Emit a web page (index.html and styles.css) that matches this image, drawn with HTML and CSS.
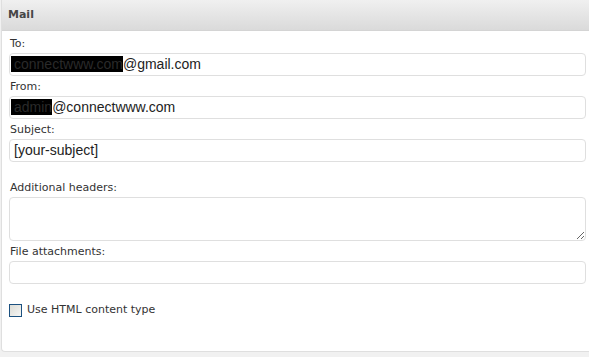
FILE: index.html
```html
<!DOCTYPE html>
<html lang="en">
<head>
    <meta charset="UTF-8">
    <title>Mail</title>
    <link rel="stylesheet" href="styles.css">
</head>
<body>
    <div class="panel">
        <div class="panel-head">Mail</div>
        <div class="panel-body">
            <div class="field">
                <div class="label">To:</div>
                <div class="text-box"><span class="redact">connectwww.com</span>@gmail.com</div>
            </div>
            <div class="field">
                <div class="label">From:</div>
                <div class="text-box"><span class="redact">admin</span>@connectwww.com</div>
            </div>
            <div class="field">
                <div class="label">Subject:</div>
                <div class="text-box">[your-subject]</div>
            </div>
            <div class="field spaced">
                <div class="label">Additional headers:</div>
                <textarea class="text-area"></textarea>
            </div>
            <div class="field">
                <div class="label">File attachments:</div>
                <div class="text-box"></div>
            </div>
            <div class="check-row">
                <span class="check"></span>
                <span class="check-label">Use HTML content type</span>
            </div>
        </div>
    </div>
</body>
</html>
```

FILE: styles.css
```css
html, body {
    margin: 0;
    padding: 0;
    overflow: hidden;
}
body {
    background-color: #f1f1f1;
    font-family: 'DejaVu Sans', Verdana, sans-serif;
    font-size: 11px;
    color: #333;
    height: 357px;
}
.panel {
    margin-left: 1px;
    width: 620px;
    height: 352px;
    box-sizing: border-box;
    background-color: #fff;
    border-left: 1px solid #dfdfdf;
    border-bottom: 1px solid #dfdfdf;
    border-bottom-left-radius: 4px;
}
.panel-head {
    height: 30px;
    line-height: 29px;
    padding-left: 6px;
    font-weight: bold;
    color: #464646;
    background: linear-gradient(to bottom, #f0f0f0, #dadada);
    border-bottom: 1px solid #d4d4d4;
}
.panel-body {
    padding: 4px 0 0 7px;
    width: 577px;
}
.field {
    margin-bottom: 2px;
}
.field.spaced {
    margin-top: 17px;
}
.label {
    line-height: 15px;
    padding-top: 1px;
    margin-bottom: 2px;
    padding-left: 1px;
}
.text-box {
    box-sizing: border-box;
    height: 23px;
    border: 1px solid #dfdfdf;
    border-radius: 4px;
    padding: 0 4px;
    font-family: 'Liberation Sans', Arial, sans-serif;
    font-size: 14px;
    line-height: 21px;
    color: #222;
    white-space: nowrap;
    overflow: hidden;
}
.redact {
    background-color: #000;
    color: #2a2a2a;
    margin-left: -3px;
    padding-left: 3px;
}
.text-area {
    display: block;
    box-sizing: border-box;
    width: 100%;
    height: 44px;
    margin: 0;
    border: 1px solid #dfdfdf;
    border-radius: 4px;
    outline: none;
}
.check-row {
    display: flex;
    align-items: center;
    gap: 5px;
    margin-top: 19px;
}
.check {
    width: 11px;
    height: 11px;
    border: 1px solid #1c5180;
    background: linear-gradient(135deg, #dcdcd6, #f6f6f4);
}
.check-label {
    line-height: 14px;
}
```
